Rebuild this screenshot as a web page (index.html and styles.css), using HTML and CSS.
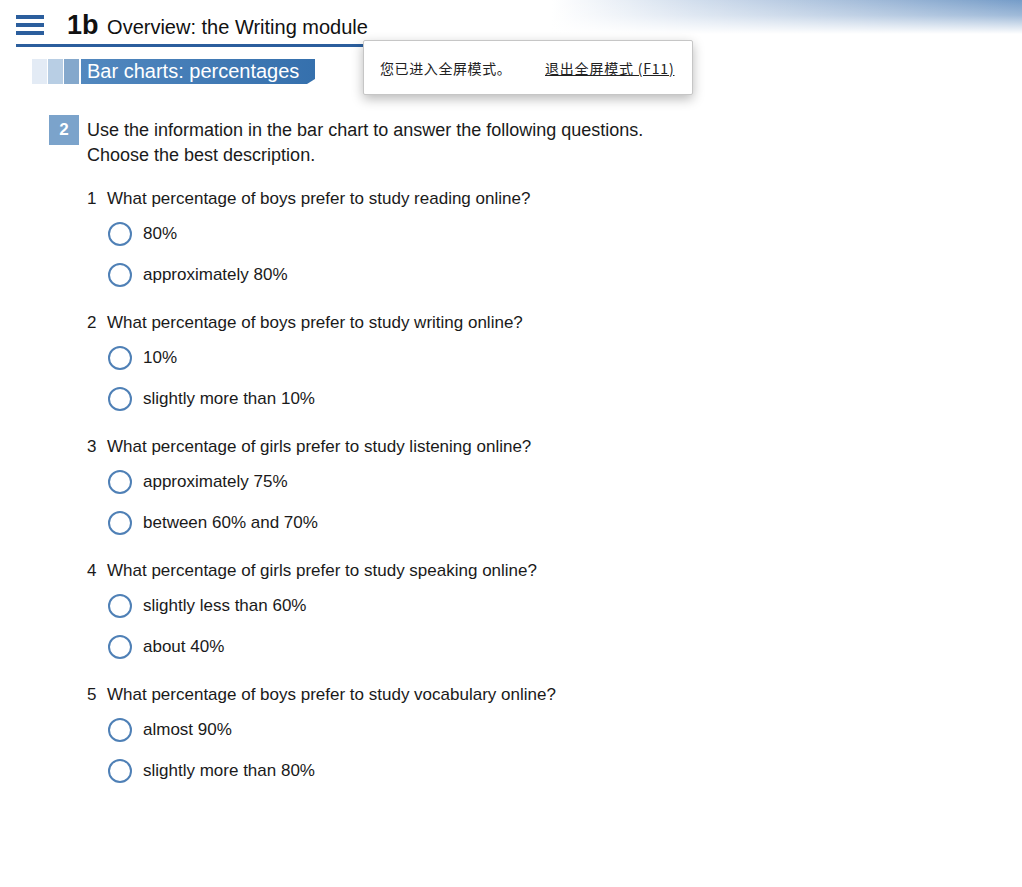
FILE: index.html
```html
<!DOCTYPE html>
<html>
<head>
<meta charset="utf-8">
<link rel="stylesheet" href="styles.css">
</head>
<body>
<div class="banner"></div>
<header class="top">
  <div class="menu"><span></span><span></span><span></span></div>
  <h1 class="title"><span class="unit">1b</span> Overview: the Writing module</h1>
</header>
<div class="section">
  <span class="tile t1"></span><span class="tile t2"></span><span class="tile t3"></span>
  <div class="section-name">Bar charts: percentages</div>
</div>

<div class="task">
  <div class="num">2</div>
  <div class="instr">Use the information in the bar chart to answer the following questions.<br>Choose the best description.</div>
</div>

<ol class="questions">
  <li class="q">
    <div class="q-text"><span class="qn">1</span>What percentage of boys prefer to study reading online?</div>
    <div class="opt"><span class="radio"></span>80%</div>
    <div class="opt"><span class="radio"></span>approximately 80%</div>
  </li>
  <li class="q">
    <div class="q-text"><span class="qn">2</span>What percentage of boys prefer to study writing online?</div>
    <div class="opt"><span class="radio"></span>10%</div>
    <div class="opt"><span class="radio"></span>slightly more than 10%</div>
  </li>
  <li class="q">
    <div class="q-text"><span class="qn">3</span>What percentage of girls prefer to study listening online?</div>
    <div class="opt"><span class="radio"></span>approximately 75%</div>
    <div class="opt"><span class="radio"></span>between 60% and 70%</div>
  </li>
  <li class="q">
    <div class="q-text"><span class="qn">4</span>What percentage of girls prefer to study speaking online?</div>
    <div class="opt"><span class="radio"></span>slightly less than 60%</div>
    <div class="opt"><span class="radio"></span>about 40%</div>
  </li>
  <li class="q">
    <div class="q-text"><span class="qn">5</span>What percentage of boys prefer to study vocabulary online?</div>
    <div class="opt"><span class="radio"></span>almost 90%</div>
    <div class="opt"><span class="radio"></span>slightly more than 80%</div>
  </li>
</ol>

<div class="toast">
  <span class="toast-msg">您已进入全屏模式。</span>
  <a class="toast-link" href="#">退出全屏模式 (F11)</a>
</div>
</body>
</html>
```

FILE: styles.css
```css
html, body {
  margin: 0;
  padding: 0;
  background: #fff;
}
body {
  font-family: "Liberation Sans", Arial, sans-serif;
  color: #1a1a1a;
  position: relative;
  min-height: 887px;
}
.banner {
  position: absolute;
  top: 0;
  right: 0;
  width: 470px;
  height: 34px;
  background:
    linear-gradient(to bottom, rgba(255,255,255,0) 0%, rgba(255,255,255,0.3) 45%, #fff 100%),
    linear-gradient(to right, #fff 0%, #d2deed 30%, #a5bdda 65%, #759cc8 100%);
  z-index: 0;
}
.top {
  position: relative;
  z-index: 1;
  display: flex;
  align-items: center;
  margin: 8px 0 0 16px;
  width: 349px;
  height: 36px;
  border-bottom: 3px solid #2b5e9d;
}
.menu {
  display: flex;
  flex-direction: column;
  gap: 4px;
  flex: 0 0 28px;
  width: 28px;
  margin-top: -3px;
}
.menu span {
  display: block;
  height: 4px;
  background: #2b5e9d;
}
.title {
  margin: 0 0 0 23px;
  font-size: 20px;
  font-weight: normal;
  white-space: nowrap;
  color: #111;
  line-height: 36px;
}
.unit {
  font-size: 27px;
  font-weight: bold;
  margin-right: 3px;
}
.section {
  display: flex;
  margin: 12px 0 0 32px;
  height: 25px;
  gap: 1px;
}
.tile {
  width: 15px;
  height: 25px;
}
.t1 { background: #e3ebf5; }
.t2 { background: #b8cee4; }
.t3 { background: #84a8cc; margin-right: 1px; }
.section-name {
  width: 228px;
  padding-left: 6px;
  height: 25px;
  line-height: 25px;
  font-size: 20px;
  color: #fff;
  background: linear-gradient(to right, #5288bf, #3570ad);
  clip-path: polygon(0 0, 100% 0, 100% 20px, calc(100% - 8px) 100%, 0 100%);
}
.task {
  display: flex;
  align-items: flex-start;
  margin: 31px 0 0 49px;
}
.num {
  width: 30px;
  height: 30px;
  line-height: 30px;
  text-align: center;
  background: #7ba3cb;
  color: #fff;
  font-weight: bold;
  font-size: 17px;
}
.instr {
  margin-left: 8px;
  margin-top: 3px;
  font-size: 18px;
  line-height: 25px;
}
.questions {
  list-style: none;
  margin: 19px 0 0 87px;
  padding: 0;
}
.q + .q {
  margin-top: 16px;
}
.q-text {
  font-size: 17px;
  line-height: 24px;
  margin-bottom: 2px;
}
.qn {
  display: inline-block;
  width: 20px;
}
.opt {
  display: flex;
  align-items: center;
  height: 41px;
  margin-left: 21px;
  font-size: 17px;
}
.radio {
  box-sizing: border-box;
  width: 24px;
  height: 24px;
  border: 2px solid #4f80b6;
  border-radius: 50%;
  margin-right: 11px;
  background: #fff;
}
.toast {
  position: absolute;
  left: 363px;
  top: 40px;
  box-sizing: border-box;
  width: 330px;
  height: 55px;
  background: #fff;
  border: 1px solid #c6c6c6;
  border-radius: 2px;
  box-shadow: 0 4px 12px rgba(0,0,0,0.28);
  display: flex;
  align-items: center;
  padding-left: 16px;
  font-family: "Noto Sans CJK SC", "Liberation Sans", sans-serif;
  font-size: 14px;
  color: #222;
  z-index: 5;
}
.toast-msg {
  width: 165px;
  letter-spacing: 0.6px;
}
.toast-link {
  color: #222;
  text-decoration: underline;
  letter-spacing: 0.8px;
  font-family: "Noto Sans CJK SC", "Liberation Sans", sans-serif;
}
```
